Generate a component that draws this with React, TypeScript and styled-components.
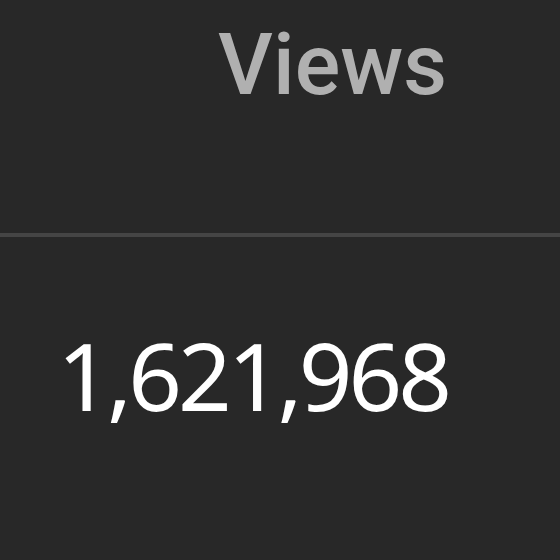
import React from 'react'
import styled, { createGlobalStyle } from 'styled-components'

const Global = createGlobalStyle`
  html, body {
    margin: 0;
    padding: 0;
    background: #282828;
  }
  body {
    width: 560px;
    height: 560px;
    overflow: hidden;
  }
`

const Table = styled.div`
  display: flex;
  flex-direction: column;
  width: 560px;
  height: 560px;
  background: #282828;
`

const HeaderRow = styled.div`
  display: flex;
  justify-content: flex-end;
  align-items: flex-start;
  height: 237px;
  padding-right: 113px;
  box-sizing: border-box;
  border-bottom: 4px solid #454545;
`

const HeaderCell = styled.div`
  font-family: Roboto, "Liberation Sans", sans-serif;
  font-weight: 500;
  font-size: 85px;
  line-height: 1;
  color: #b0b0b0;
  padding-top: 23px;
`

const BodyRow = styled.div`
  display: flex;
  justify-content: flex-end;
  padding-right: 112px;
  padding-top: 91px;
`

const ValueCell = styled.div`
  font-family: "Noto Sans", "Open Sans", sans-serif;
  font-weight: 400;
  font-size: 94px;
  line-height: 1;
  letter-spacing: -4px;
  color: #ffffff;
`

export default function App() {
  return (
    <>
      <Global />
      <Table>
        <HeaderRow>
          <HeaderCell>Views</HeaderCell>
        </HeaderRow>
        <BodyRow>
          <ValueCell>1,621,968</ValueCell>
        </BodyRow>
      </Table>
    </>
  )
}
